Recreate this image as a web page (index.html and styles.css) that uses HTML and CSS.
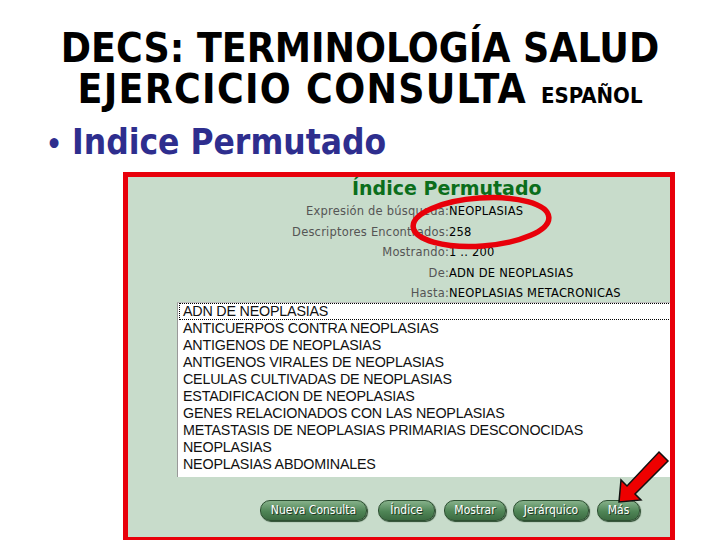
FILE: index.html
```html
<!DOCTYPE html>
<html>
<head>
<meta charset="utf-8">
<link rel="stylesheet" href="styles.css">
</head>
<body>
<div class="slide">
  <h1 class="title">
    <span class="line">DECS: TERMINOLOGÍA SALUD</span>
    <span class="line l2">EJERCICIO CONSULTA <small>ESPAÑOL</small></span>
  </h1>
  <div class="bullet"><span class="dot">•</span>Indice Permutado</div>
  <div class="frame">
    <div class="inner">
      <div class="ptitle">Índice Permutado</div>
      <div class="info">
        <span class="lab">Expresión de búsqueda:</span><span class="val">NEOPLASIAS</span>
        <span class="lab">Descriptores Encontrados:</span><span class="val">258</span>
        <span class="lab">Mostrando:</span><span class="val">1 .. 200</span>
        <span class="lab">De:</span><span class="val">ADN DE NEOPLASIAS</span>
        <span class="lab">Hasta:</span><span class="val">NEOPLASIAS METACRONICAS</span>
      </div>
      <div class="list">
        <div class="item sel">ADN DE NEOPLASIAS</div>
        <div class="item">ANTICUERPOS CONTRA NEOPLASIAS</div>
        <div class="item">ANTIGENOS DE NEOPLASIAS</div>
        <div class="item">ANTIGENOS VIRALES DE NEOPLASIAS</div>
        <div class="item">CELULAS CULTIVADAS DE NEOPLASIAS</div>
        <div class="item">ESTADIFICACION DE NEOPLASIAS</div>
        <div class="item">GENES RELACIONADOS CON LAS NEOPLASIAS</div>
        <div class="item">METASTASIS DE NEOPLASIAS PRIMARIAS DESCONOCIDAS</div>
        <div class="item">NEOPLASIAS</div>
        <div class="item">NEOPLASIAS ABDOMINALES</div>
      </div>
      <div class="buttons">
        <span class="btn b1">Nueva Consulta</span>
        <span class="btn b2">Índice</span>
        <span class="btn b3">Mostrar</span>
        <span class="btn b4">Jerárquico</span>
        <span class="btn b5">Más</span>
      </div>
    </div>
  </div>
  <svg class="ellipse" width="720" height="540" viewBox="0 0 720 540">
    <ellipse cx="481" cy="222" rx="68" ry="24" transform="rotate(-4 481 222)" fill="none" stroke="#e8000a" stroke-width="5.5"/>
  </svg>
  <svg class="arrow" width="720" height="540" viewBox="0 0 720 540">
    <polygon points="659,452 668,461 635,494 641,500 619,502 621,480 627,486" fill="#ee0000" stroke="#111" stroke-width="1.5" stroke-linejoin="miter"/>
  </svg>
</div>
</body>
</html>
```
FILE: styles.css
```css
html, body { margin: 0; padding: 0; background: #fff; }
.slide { position: relative; width: 720px; height: 540px; overflow: hidden; }
.title {
  margin: 0; padding-top: 28px;
  font-family: "DejaVu Sans Condensed", "DejaVu Sans", sans-serif;
  font-weight: bold; font-size: 40.5px; line-height: 41px;
  color: #000; text-align: center;
}
.title .line { display: block; }
.title .l2 { letter-spacing: 1.3px; }
.title small { font-size: 22px; letter-spacing: 0; }
.bullet {
  margin: 7px 0 0 46px;
  font-family: "DejaVu Sans Condensed", "DejaVu Sans", sans-serif;
  font-size: 35px; line-height: 38px; color: #2e2e8e; font-weight: bold;
}
.bullet .dot { display: inline-block; width: 26px; font-size: 28px; }
.frame {
  margin: 8px 0 0 123px; width: 542px; height: 360px;
  border: 5px solid #e8000a; overflow: hidden; background: #c8dccb;
}
.inner { width: 700px; }
.ptitle {
  padding-top: 0; margin-left: 224px;
  font-family: "DejaVu Sans", Verdana, sans-serif; font-weight: bold;
  font-size: 19px; color: #0b6e1b; line-height: 22px;
}
.info {
  display: grid; grid-template-columns: 321px auto;
  font-family: "DejaVu Sans", Verdana, sans-serif; font-size: 11.5px; line-height: 20.5px;
  letter-spacing: 0.2px; margin-top: 2px;
}
.lab { text-align: right; color: #555; }
.val { color: #000; }
.list {
  margin: -2px 0 0 49px; width: 560px; height: 175px;
  background: #fff; border-left: 1px solid #999; border-top: 1px solid #bbb;
  font-family: "Liberation Sans", Arial, sans-serif; font-size: 14.3px; line-height: 17.1px;
  box-sizing: border-box;
}
.item { padding-left: 5px; color: #111; letter-spacing: -0.2px; white-space: nowrap; }
.item.sel { outline: 1px dotted #000; outline-offset: -1px; margin-right: 64px; padding-left: 4px; margin-left: 1px; }
.buttons { display: flex; gap: 9px; margin: 23px 0 0 132px; }
.btn {
  display: inline-block; height: 19px; line-height: 18px; border-radius: 10px;
  background: linear-gradient(#86b18a, #4f8556 55%, #3c6b42);
  border: 1px solid #2d4f31; box-shadow: 1px 1px 1px #2a4a2e;
  color: #fff; font-family: "DejaVu Sans Condensed", "DejaVu Sans", sans-serif;
  font-size: 12px; text-align: center; text-shadow: 1px 1px 0 #223a26;
}
.b1 { width: 105px; }
.b2 { width: 55px; margin-left: 2px; }
.b3 { width: 60px; }
.b4 { width: 74px; margin-left: -2px; }
.b5 { width: 41px; margin-left: -1px; }
.ellipse, .arrow { position: absolute; left: 0; top: 0; pointer-events: none; }
```
